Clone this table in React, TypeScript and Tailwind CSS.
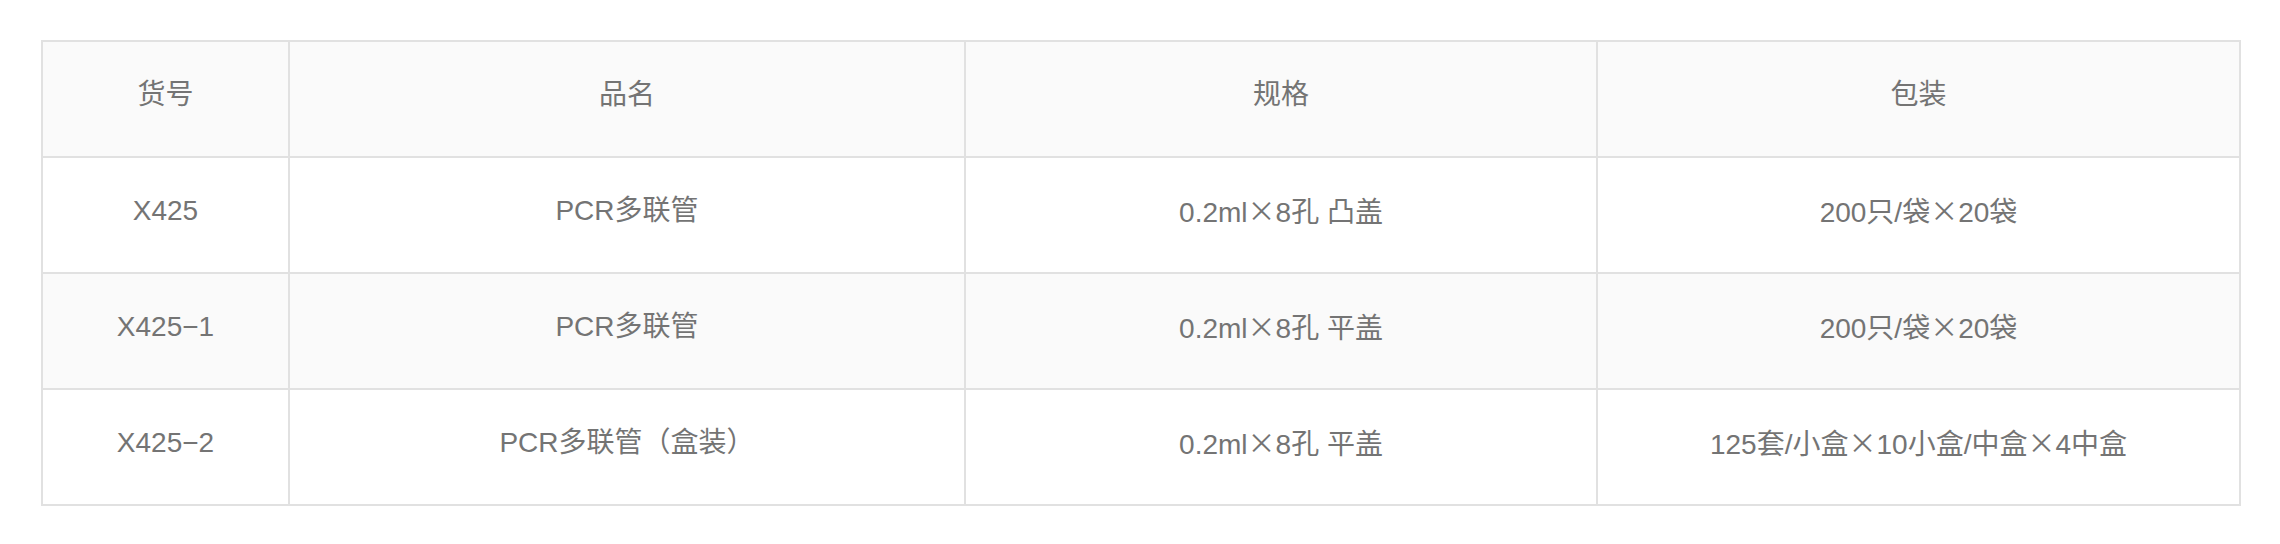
import React from "react";

const headers = ["货号", "品名", "规格", "包装"];
const rows = [
  ["X425", "PCR多联管", "0.2ml×8孔 凸盖", "200只/袋×20袋"],
  ["X425−1", "PCR多联管", "0.2ml×8孔 平盖", "200只/袋×20袋"],
  ["X425−2", "PCR多联管（盒装）", "0.2ml×8孔 平盖", "125套/小盒×10小盒/中盒×4中盒"],
];

const cell =
  "flex h-[116px] items-center justify-center border-r-2 border-b-2 border-[#e1e1e1] pb-[8px] text-[28px] leading-none text-[#747474] whitespace-pre";

function Txt({ s }: { s: string }) {
  const parts = s.split("×");
  return (
    <span>
      {parts.map((p, i) => (
        <React.Fragment key={i}>
          {i > 0 && <span className="font-['Noto_Sans_CJK_SC'] leading-none">×</span>}
          {p}
        </React.Fragment>
      ))}
    </span>
  );
}

export default function App() {
  return (
    <div
      className="min-h-[544px] w-[2280px] bg-white pl-[41px] pt-[40px]"
      style={{ fontFamily: '"Liberation Sans", "Noto Sans CJK SC", sans-serif' }}
    >
      <div className="inline-grid grid-cols-[247px_676px_632px_643px] border-l-2 border-t-2 border-[#e1e1e1]">
        {headers.map((h) => (
          <div key={h} className={`${cell} bg-[#fafafa]`}>
            {h}
          </div>
        ))}
        {rows.map((r, i) =>
          r.map((c, j) => (
            <div key={`${i}-${j}`} className={`${cell} ${i === 1 ? "bg-[#fafafa]" : "bg-white"}`}>
              <Txt s={c} />
            </div>
          ))
        )}
      </div>
    </div>
  );
}
